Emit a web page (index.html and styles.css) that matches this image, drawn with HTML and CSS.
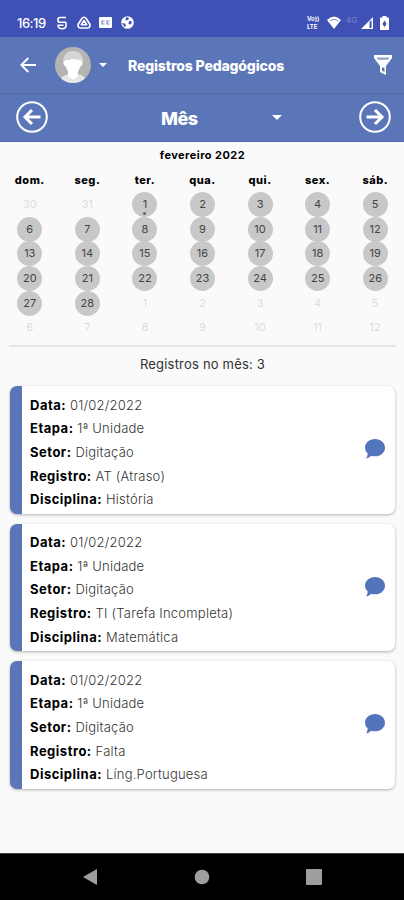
FILE: index.html
```
<!DOCTYPE html>
<html lang="pt-BR">

<head>
    <meta charset="utf-8">
    <title>Registros Pedagógicos</title>
    <link rel="stylesheet" href="styles.css">
</head>

<body>
    <!-- status bar -->
    <div class="status">
        <span class="clock">16:19</span>
        <svg class="st-app" width="12" height="14" viewBox="0 0 12 14" fill="none" stroke="#fff" stroke-width="1.600">
            <path d="M10 1.500H4Q2 1.500 2 3.500V4.500Q2 6.300 4 6.300H10M1.500 9.300H7.500M10 6.300V9.500Q10 12.700 6 12.700Q2.200 12.700 2 9.300" />
        </svg>
        <svg class="st-drive" width="14" height="13" viewBox="0 0 14 13" fill="none" stroke="#fff" stroke-width="1.600" stroke-linejoin="round">
            <path d="M4.500 3Q7 -.5 9.500 3L13 8.500Q13 12 10.500 12H3.500Q1 12 1 8.500Z" />
            <path d="M4.300 8.800L7 4.500L9.700 8.800Z" />
        </svg>
        <svg class="st-card" width="13" height="11" viewBox="0 0 13 11">
            <rect width="13" height="11" rx="1" fill="#fff" />
            <path d="M5.500 4H3V7H5.500M10.500 4H8V7H10.500" fill="none" stroke="#7d87cd" stroke-width="1.200" />
        </svg>
        <svg class="st-ball" width="13" height="13" viewBox="0 0 13 13">
            <circle cx="6.500" cy="6.500" r="6.300" fill="#fff" />
            <path d="M5 1L8 2L7 4L4.500 4.500ZM8 5L11 5.500L10 8.500L7.500 8ZM1 7L4 7.500L5 10L3.500 11Z" fill="#3f51b5" />
        </svg>
        <span class="volte">Vo))<br>LTE</span>
        <svg class="st-wifi" width="14" height="13" viewBox="0 0 14 13">
            <path d="M0 4Q7 -3 14 4L7 13Z" fill="#fff" />
            <path d="M3 5Q7 1.800 11 5" fill="none" stroke="#7d89cf" stroke-width="1" />
        </svg>
        <span class="net">4G</span>
        <svg class="st-signal" width="12" height="12" viewBox="0 0 12 12">
            <path d="M0 12L12 0V12Z" fill="#fff" />
            <path d="M8.500 5V11H10.500V3Z" fill="#3f51b5" />
        </svg>
        <svg class="st-battery" width="9" height="14" viewBox="0 0 9 14">
            <path d="M2.500 0H6.500V1.500H9V14H0V1.500H2.500Z" fill="#fff" />
            <path d="M4.500 4.500L6.500 8L4.500 11L2.500 8Z" fill="#3f51b5" />
        </svg>
    </div>

    <!-- toolbar -->
    <div class="toolbar">
        <svg class="back" width="16" height="16" viewBox="0 0 16 16" fill="none" stroke="#fff" stroke-width="1.900">
            <path d="M16 8H1.500M8.300 1L1.300 8L8.300 15" />
        </svg>
        <svg class="avatar" width="36" height="36" viewBox="0 0 36 36">
            <defs>
                <clipPath id="face">
                    <circle cx="18" cy="18" r="18" />
                </clipPath>
            </defs>
            <g clip-path="url(#face)">
                <rect width="36" height="36" fill="#b4b4b2" />
                <path d="M3 36C5 29 11 28 14 27H23C27 28 31 30 33 36Z" fill="#e6e6e6" />
                <path d="M8 17C7 8 12 4 18 4S29 8 28 17L25 20H11Z" fill="#d6d6d6" />
                <path d="M9 15Q10 12 14 13Q18 11 22 13Q26 12 27 15V18L25 20Q23 27 18 28Q13 27 11 20L9 18Z" fill="#fff" />
                <path d="M13 24H23V29L18 33L13 29Z" fill="#fff" />
            </g>
        </svg>
        <span class="caret"></span>
        <h1 class="title">Registros Pedagógicos</h1>
        <svg class="filter" width="20" height="21" viewBox="0 0 20 21">
            <path d="M1 0H19V3L13 11V20L7 17V11L1 3Z" fill="#fff" />
            <path d="M3.500 2.500H16.500L15 4.700H5Z" fill="#929fd0" />
            <path d="M9 12.500H11.500V17L9 15.800Z" fill="#5b76b8" />
        </svg>
    </div>

    <!-- month selector -->
    <div class="period">
        <svg width="32" height="32" viewBox="0 0 32 32" fill="none" stroke="#fff">
            <circle cx="16" cy="16" r="14.800" stroke-width="2" />
            <path d="M24.500 16H9M16 9L9 16L16 23" stroke-width="3" />
        </svg>
        <span class="period-name">Mês</span>
        <span class="caret period-caret"></span>
        <svg class="period-next" width="32" height="32" viewBox="0 0 32 32" fill="none" stroke="#fff">
            <circle cx="16" cy="16" r="14.800" stroke-width="2" />
            <path d="M7.500 16H23M16 9L23 16L16 23" stroke-width="3" />
        </svg>
    </div>

    <!-- calendar -->
    <div class="calendar">
        <div class="month">fevereiro 2022</div>
        <div class="week-days">
            <span>dom.</span><span>seg.</span><span>ter.</span><span>qua.</span><span>qui.</span><span>sex.</span><span>sáb.</span>
        </div>
        <div class="days">
            <span class="out">30</span><span class="out">31</span><span class="event">1</span><span>2</span><span>3</span><span>4</span><span>5</span>
            <span>6</span><span>7</span><span>8</span><span>9</span><span>10</span><span>11</span><span>12</span>
            <span>13</span><span>14</span><span>15</span><span>16</span><span>17</span><span>18</span><span>19</span>
            <span>20</span><span>21</span><span>22</span><span>23</span><span>24</span><span>25</span><span>26</span>
            <span>27</span><span>28</span><span class="out">1</span><span class="out">2</span><span class="out">3</span><span class="out">4</span><span class="out">5</span>
            <span class="out">6</span><span class="out">7</span><span class="out">8</span><span class="out">9</span><span class="out">10</span><span class="out">11</span><span class="out">12</span>
        </div>
    </div>

    <div class="total">Registros no mês: 3</div>

    <!-- records -->
    <div class="records">
        <div class="card">
            <div class="info">
                <p><b>Data:</b> 01/02/2022</p>
                <p><b>Etapa:</b> 1ª Unidade</p>
                <p><b>Setor:</b> Digitação</p>
                <p><b>Registro:</b> AT (Atraso)</p>
                <p><b>Disciplina:</b> História</p>
            </div>
            <svg class="comment" width="20" height="20" viewBox="0 0 20 20">
                <path d="M10 0C15.500 0 20 3.800 20 8.700S15.500 17.300 10 17.300Q8 17.300 6.300 16.800Q4.500 19 1 19.500Q2.800 17 2.700 14.500Q0 12.200 0 8.700C0 3.800 4.500 0 10 0Z" />
            </svg>
        </div>
        <div class="card">
            <div class="info">
                <p><b>Data:</b> 01/02/2022</p>
                <p><b>Etapa:</b> 1ª Unidade</p>
                <p><b>Setor:</b> Digitação</p>
                <p><b>Registro:</b> TI (Tarefa Incompleta)</p>
                <p><b>Disciplina:</b> Matemática</p>
            </div>
            <svg class="comment" width="20" height="20" viewBox="0 0 20 20">
                <path d="M10 0C15.500 0 20 3.800 20 8.700S15.500 17.300 10 17.300Q8 17.300 6.300 16.800Q4.500 19 1 19.500Q2.800 17 2.700 14.500Q0 12.200 0 8.700C0 3.800 4.500 0 10 0Z" />
            </svg>
        </div>
        <div class="card">
            <div class="info">
                <p><b>Data:</b> 01/02/2022</p>
                <p><b>Etapa:</b> 1ª Unidade</p>
                <p><b>Setor:</b> Digitação</p>
                <p><b>Registro:</b> Falta</p>
                <p><b>Disciplina:</b> Líng.Portuguesa</p>
            </div>
            <svg class="comment" width="20" height="20" viewBox="0 0 20 20">
                <path d="M10 0C15.500 0 20 3.800 20 8.700S15.500 17.300 10 17.300Q8 17.300 6.300 16.800Q4.500 19 1 19.500Q2.800 17 2.700 14.500Q0 12.200 0 8.700C0 3.800 4.500 0 10 0Z" />
            </svg>
        </div>
    </div>

    <!-- android navigation -->
    <div class="nav">
        <svg width="16" height="16" viewBox="0 0 16 16"><path d="M15 0V16L1 8Z" /></svg>
        <svg width="16" height="16" viewBox="0 0 16 16"><circle cx="8" cy="8" r="7.300" /></svg>
        <svg width="16" height="16" viewBox="0 0 16 16"><rect width="16" height="16" rx="1" /></svg>
    </div>
</body>

</html>
```

FILE: styles.css
```
* {
    margin: 0;
    padding: 0;
    box-sizing: border-box;
}

body {
    display: flex;
    flex-direction: column;
    height: 900px;
    background: #fafafa;
    font-family: Inter, "Open Sans", sans-serif;
    font-size: 13px;
    color: #000;
    overflow: hidden;
}

svg {
    flex: none;
    display: block;
}

/*status bar*/

.status {
    display: flex;
    align-items: center;
    flex: none;
    height: 37px;
    padding: 8px 15px 0 17px;
    background: #3f51b5;
    color: #fff;
}

.clock {
    width: 39px;
    font-size: 13px;
    font-weight: 500;
    letter-spacing: -0.5px;
}

.st-drive {
    margin-left: 9px;
}

.st-card {
    margin-left: 8px;
}

.st-ball {
    margin-left: 9px;
}

.volte {
    margin-left: auto;
    width: 15px;
    font-size: 6px;
    font-weight: 700;
    line-height: 7.5px;
}

.st-wifi {
    margin-left: 5px;
}

.net {
    width: 11px;
    margin: -6px 3px 0 5px;
    font-size: 8px;
    color: #7884cb;
}

.st-signal {
    margin-left: 1px;
}

.st-battery {
    margin-left: 7px;
}

/*toolbar*/

.toolbar {
    display: flex;
    align-items: center;
    flex: none;
    height: 58px;
    padding: 1px 11px 2px 20px;
    background: #5b76b8;
    border-bottom: 2px solid #5470aa;
}

.avatar {
    margin-left: 19px;
}

.caret {
    border: 4px solid transparent;
    border-top-color: #fff;
    border-bottom: 0;
    margin-left: 8px;
}

.title {
    margin: 2px 0 0 21px;
    font-size: 14px;
    font-weight: 800;
    letter-spacing: -0.15px;
    color: #fff;
    white-space: nowrap;
}

.filter {
    margin: 2px 0 0 auto;
}

/*month selector*/

.period {
    display: flex;
    align-items: center;
    flex: none;
    height: 47px;
    padding: 0 13px 2px 16px;
    background: #5b76b8;
    border-bottom: 1px solid #4a68b3;
}

.period-name {
    width: 111px;
    margin: 2px 0 0 113px;
    font-size: 18px;
    font-weight: 800;
    letter-spacing: -0.5px;
    color: #fff;
}

.period-caret {
    border-width: 5px;
    border-bottom: 0;
    margin-left: 0;
}

.period-next {
    margin-left: auto;
}

/*calendar*/

.calendar {
    flex: none;
    margin-left: 1px;
    height: 203px;
}

.month {
    height: 26px;
    line-height: 26px;
    text-align: center;
    font-size: 11px;
    font-weight: 700;
    letter-spacing: 0.45px;
}

.week-days,
.days {
    display: grid;
    grid-template-columns: repeat(7, 1fr);
    justify-items: center;
}

.week-days {
    height: 24px;
    line-height: 24px;
    font-size: 11px;
    font-weight: 800;
    letter-spacing: 0.5px;
}

.days {
    grid-auto-rows: 24.7px;
}

.days span {
    position: relative;
    width: 25px;
    height: 25px;
    border-radius: 50%;
    background: #c8c8c8;
    color: #444;
    font-size: 11px;
    line-height: 25px;
    text-align: center;
}

.days .out {
    background: none;
    color: #dcdcdc;
}

/*event mark below the number*/

.days .event:after {
    content: '';
    position: absolute;
    left: 11px;
    bottom: 2px;
    width: 3px;
    height: 3px;
    border-radius: 50%;
    background: #666;
}

.total {
    flex: none;
    height: 41px;
    margin: 0 8px 0 9px;
    border-top: 2px solid #e5e5e5;
    line-height: 35px;
    text-align: center;
    letter-spacing: 0.2px;
    color: #333;
}

/*records*/

.records {
    display: flex;
    flex-direction: column;
    flex: 1;
    gap: 10px;
    padding: 0 9px 0 10px;
}

.card {
    display: flex;
    align-items: center;
    height: 127.5px;
    padding-right: 10px;
    border-left: 12px solid #5b76b8;
    border-radius: 7px;
    background: #fff;
    box-shadow: 0 1px 3px rgba(0, 0, 0, 0.3);
}

.info {
    flex: 1;
    padding: 6px 0 0 8px;
    line-height: 23.6px;
    font-weight: 300;
    letter-spacing: 0.22px;
    color: #333;
}

.info b {
    font-weight: 700;
    letter-spacing: 0.5px;
    color: #000;
}

.comment {
    margin-bottom: 1px;
    fill: #5174bb;
}

/*android navigation*/

.nav {
    display: flex;
    align-items: center;
    justify-content: space-between;
    flex: none;
    height: 47px;
    padding: 0 82px;
    background: #000;
    border-top: 1px solid #444;
    fill: #9e9e9e;
}
```
